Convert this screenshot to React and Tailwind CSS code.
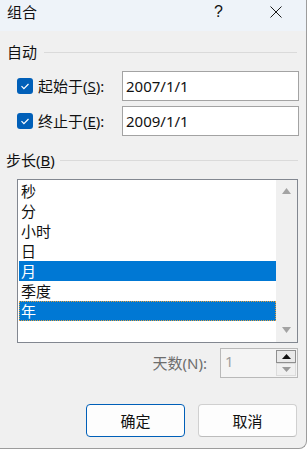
const CheckBox = () => (
  <span className="w-4 h-4 rounded-[3px] bg-[#005fb8] flex items-center justify-center shrink-0">
    <svg width="16" height="16" viewBox="0 0 16 16">
      <path d="M4.5 8.2l2.4 2.4 4.6-4.6" fill="none" stroke="#fff" strokeWidth="1.2" />
    </svg>
  </span>
);

const items = [
  { label: '秒' },
  { label: '分' },
  { label: '小时' },
  { label: '日' },
  { label: '月', selected: true },
  { label: '季度' },
  { label: '年', selected: true, focus: true },
];

export default function App() {
  return (
    <div className="w-[307px] h-[450px] bg-white font-['Noto_Sans','Noto_Sans_CJK_SC',sans-serif] text-[15px] text-[#111]">
      <div className="w-[307px] h-[449px] bg-[#f0f0f0] border-r border-b border-[#9c9c9c] rounded-br-[8px] overflow-hidden flex flex-col">
        {/* title bar */}
        <div className="h-[31px] shrink-0 bg-[#eef3f9] flex items-center pb-[7px] pl-[7px]">
          <span className="leading-[20px]">组合</span>
          <span className="ml-auto leading-[20px] font-['Liberation_Sans',sans-serif] text-[16px]">?</span>
          <svg className="ml-[47px] mr-[24px]" width="12" height="12" viewBox="0 0 12 12">
            <path d="M0.5 0.5l11 11M11.5 0.5l-11 11" stroke="#1a1a1a" strokeWidth="1" />
          </svg>
        </div>

        {/* 自动 */}
        <div className="mt-[11px] h-[20px] flex items-center pl-[7px] pr-[9px]">
          <span className="leading-[20px]">自动</span>
          <div className="flex-1 h-px bg-[#dadada] ml-[7px]" />
        </div>

        <div className="mt-[9px] h-[30px] flex items-center pl-[17px]">
          <CheckBox />
          <span className="ml-[5px] w-[84px] leading-[20px]">
            起始于(<span className="underline">S</span>):
          </span>
          <div className="w-[177px] h-[30px] border border-[#a3a3a3] bg-white pl-[3px] flex items-center leading-[20px]">
            2007/1/1
          </div>
        </div>

        <div className="mt-[5px] h-[30px] flex items-center pl-[17px]">
          <CheckBox />
          <span className="ml-[5px] w-[84px] leading-[20px]">
            终止于(<span className="underline">E</span>):
          </span>
          <div className="w-[177px] h-[30px] border border-[#a3a3a3] bg-white pl-[3px] flex items-center leading-[20px]">
            2009/1/1
          </div>
        </div>

        {/* 步长 */}
        <div className="mt-[14px] h-[20px] flex items-center pl-[6px] pr-[8px]">
          <span className="leading-[20px]">
            步长(<span className="underline">B</span>)
          </span>
          <div className="flex-1 h-px bg-[#dadada] ml-[5px]" />
        </div>

        <div className="mt-[9px] ml-[17px] w-[281px] h-[164px] border border-[#828790] bg-white flex">
          <div className="flex-1 pt-[1px] pl-[1px]">
            {items.map((it) => (
              <div
                key={it.label}
                className={
                  it.selected
                    ? 'h-[20px] leading-[20px] pl-[2px] bg-[#0078d4] text-white' +
                      (it.focus ? ' outline-1 outline-dotted outline-[#e0a040] -outline-offset-1' : '')
                    : 'h-[20px] leading-[20px] pl-[2px]'
                }
              >
                {it.label}
              </div>
            ))}
          </div>
          <div className="w-[21px] bg-[#f0f0f0] flex flex-col items-center justify-between pt-[8px] pb-[9px]">
            <svg width="9" height="6" viewBox="0 0 9 6">
              <path d="M4.5 0L9 6H0z" fill="#a3a3a3" />
            </svg>
            <svg width="9" height="6" viewBox="0 0 9 6">
              <path d="M0 0h9L4.5 6z" fill="#a3a3a3" />
            </svg>
          </div>
        </div>

        {/* 天数 */}
        <div className="mt-[5px] h-[30px] flex items-center justify-end pr-[8px]">
          <span className="leading-[20px] text-[#6d6d6d] mr-[13px]">天数(N):</span>
          <div className="w-[78px] h-[30px] border border-[#b9b9b9] bg-[#f4f4f4] flex">
            <span className="flex-1 pl-[4px] leading-[20px] pt-[2px] text-[#a0a0a0]">1</span>
            <div className="w-[21px] pt-[1px] pr-[1px] flex flex-col">
              <div className="h-[13px] border border-[#8f8f8f] bg-[#e9e9e9] flex items-center justify-center">
                <svg width="9" height="5" viewBox="0 0 9 5">
                  <path d="M4.5 0L9 5H0z" fill="#111" />
                </svg>
              </div>
              <div className="h-[13px] border border-[#dcdcdc] bg-[#f0f0f0] flex items-center justify-center">
                <svg width="9" height="5" viewBox="0 0 9 5">
                  <path d="M0 0h9L4.5 5z" fill="#9a9a9a" />
                </svg>
              </div>
            </div>
          </div>
        </div>

        {/* buttons */}
        <div className="mt-[26px] flex justify-end gap-[13px] pr-[9px]">
          <button className="w-[99px] h-[33px] rounded-[4px] border border-[#005fb8] bg-[#fdfdfd] leading-[20px]">
            确定
          </button>
          <button className="w-[99px] h-[33px] rounded-[4px] border border-[#d0d0d0] border-b-[#bcbcbc] bg-[#fdfdfd] leading-[20px]">
            取消
          </button>
        </div>
      </div>
    </div>
  );
}
